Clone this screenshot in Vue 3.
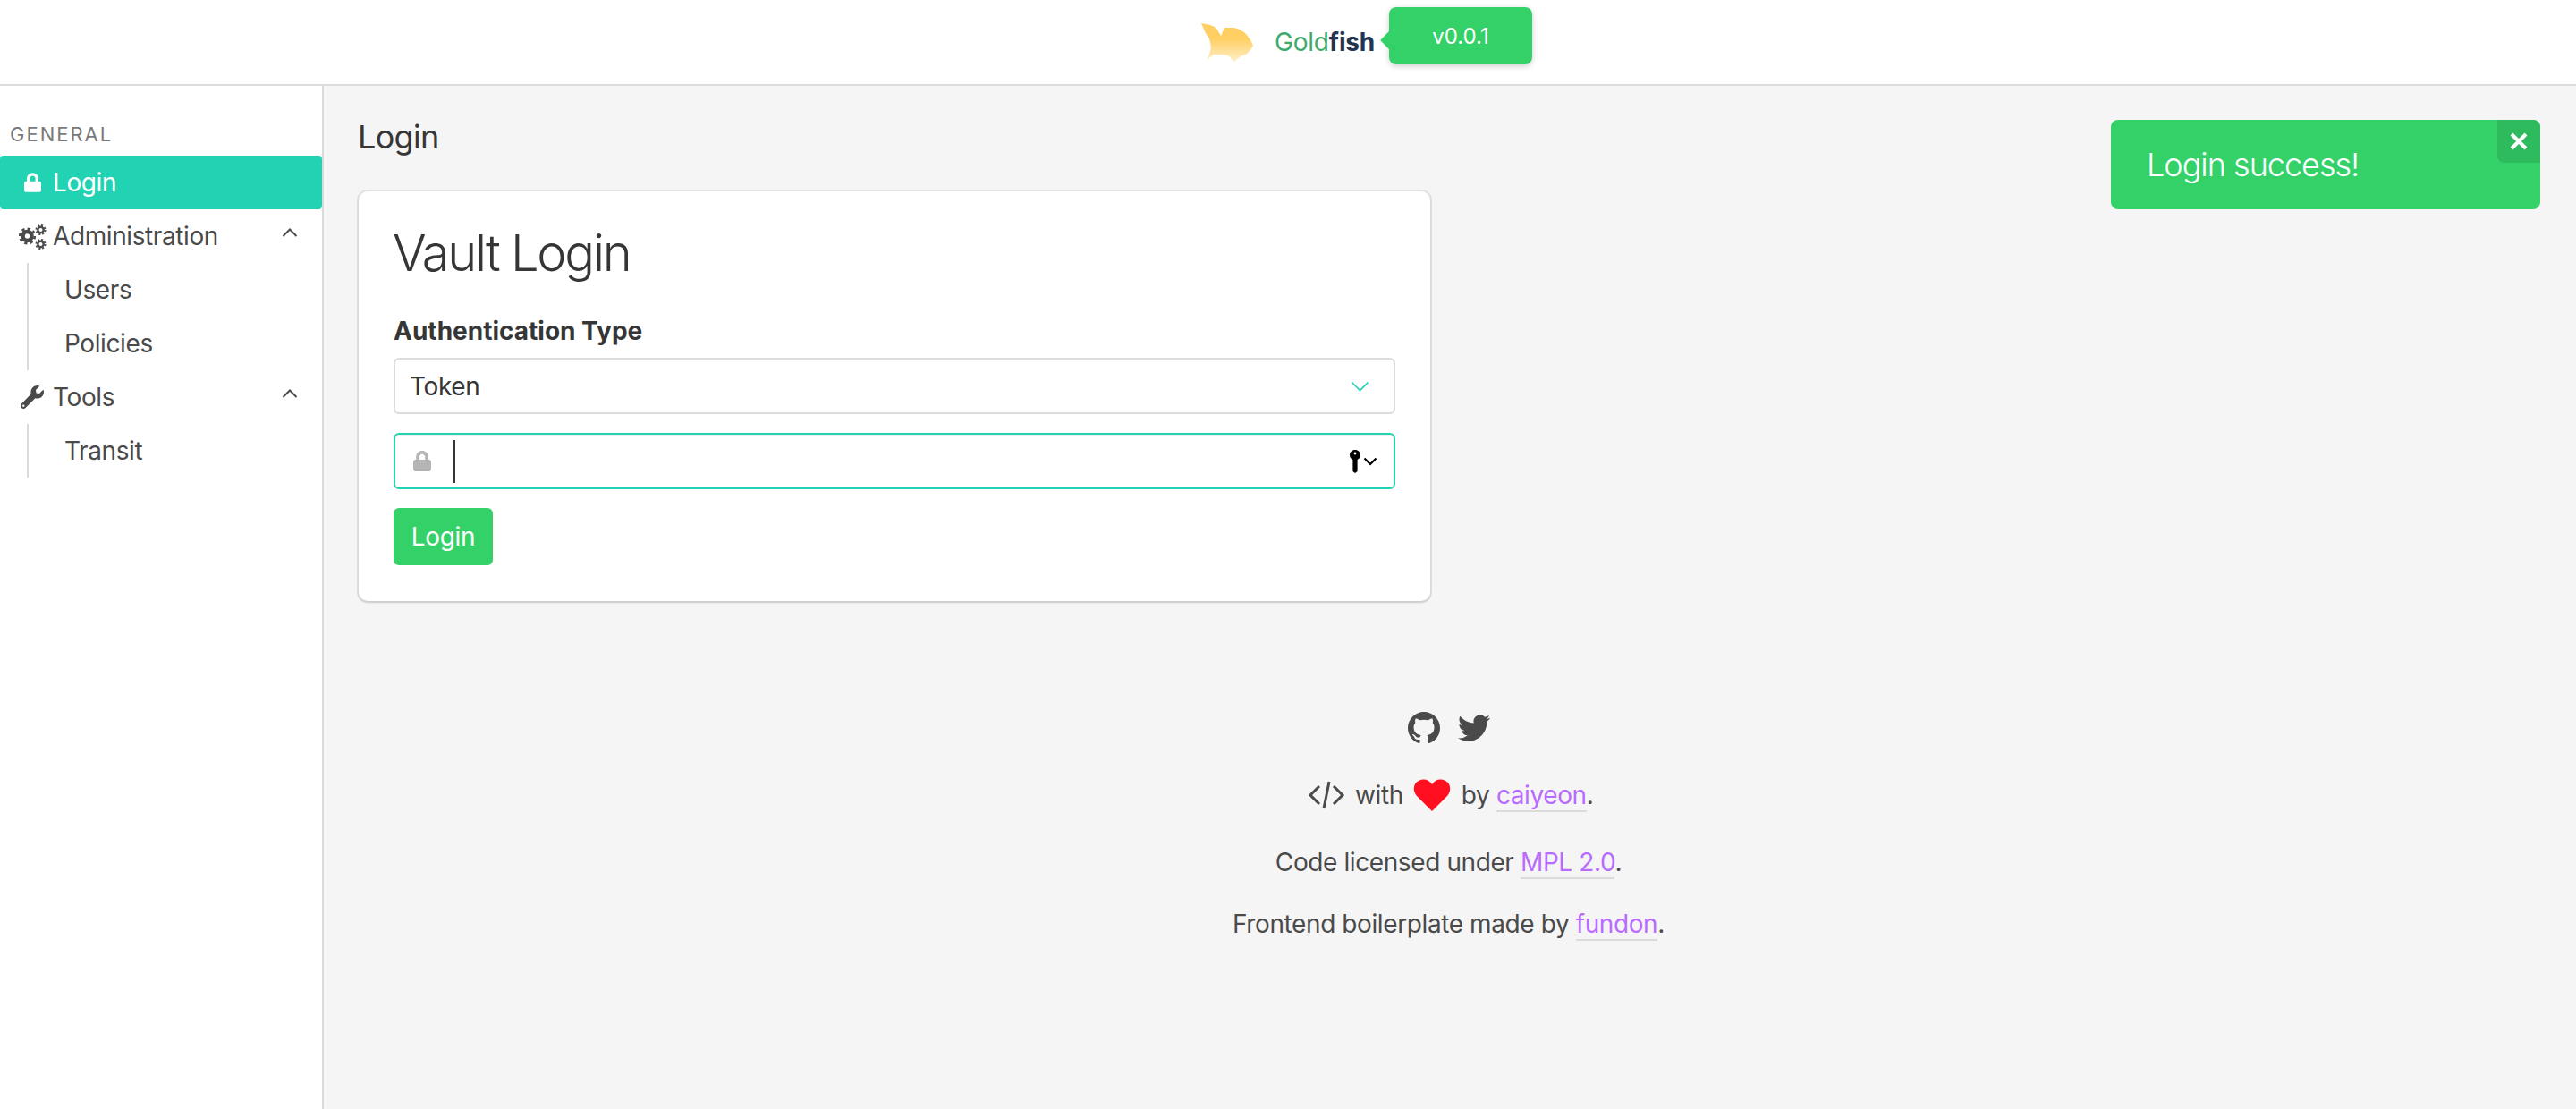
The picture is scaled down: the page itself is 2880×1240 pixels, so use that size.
<template>
  <div class="page">
    <header class="topbar">
      <div class="brand">
        <svg class="fish" viewBox="0 0 58 44" width="58" height="44">
          <defs>
            <linearGradient id="fishGold" x1="0" y1="0" x2="0" y2="1">
              <stop offset="0.4" stop-color="#ffcf63" />
              <stop offset="1" stop-color="#ffefca" />
            </linearGradient>
          </defs>
          <path
            d="M0 1 L10 3 Q17 5 19 10 L22 15 L26 6 L37 6 Q45 8 49 12 Q55 18 58 26 Q55 32 50 36 L44 38 L37 44 L30 37 L22 36 L14 36 L6 42 Q10 35 11 28 L9 18 Q5 13 4 10 Z"
            fill="url(#fishGold)"
          />
        </svg>
        <span class="brand-name">Gold<b>fish</b></span>
        <span class="version">v0.0.1</span>
      </div>
    </header>

    <div class="body-row">
      <aside class="sidebar">
        <p class="menu-label">GENERAL</p>
        <div class="menu-item active">
          <span class="menu-icon">
            <svg viewBox="0 0 448 512" width="19" height="22"><path fill="#fff" :d="lockPath" /></svg>
          </span>
          Login
        </div>
        <template v-for="group in groups" :key="group.label">
          <div class="menu-item">
            <span class="menu-icon">
              <svg v-if="group.icon === 'cogs'" viewBox="0 0 31 29" width="31" height="29">
                <circle cx="9.5" cy="14" r="5" fill="none" stroke="#4a4a4a" stroke-width="4.6" />
                <circle cx="9.5" cy="14" r="8.3" fill="none" stroke="#4a4a4a" stroke-width="2.6" stroke-dasharray="3.3 3.2" />
                <circle cx="24.5" cy="7" r="3.2" fill="none" stroke="#4a4a4a" stroke-width="2.4" />
                <circle cx="24.5" cy="7" r="5" fill="none" stroke="#4a4a4a" stroke-width="2" stroke-dasharray="2 1.93" />
                <circle cx="24.5" cy="23" r="3.2" fill="none" stroke="#4a4a4a" stroke-width="2.4" />
                <circle cx="24.5" cy="23" r="5" fill="none" stroke="#4a4a4a" stroke-width="2" stroke-dasharray="2 1.93" />
              </svg>
              <svg v-else viewBox="0 0 512 512" width="26" height="26"><path fill="#4a4a4a" :d="wrenchPath" /></svg>
            </span>
            {{ group.label }}
            <svg class="chev" viewBox="0 0 18 10" width="18" height="10">
              <path d="M1.5 9 L9 1.5 L16.5 9" fill="none" stroke="#4a4a4a" stroke-width="2" />
            </svg>
          </div>
          <ul class="sub-list">
            <li v-for="child in group.children" :key="child">{{ child }}</li>
          </ul>
        </template>
      </aside>

      <main class="content">
        <div class="notification">
          Login success!
          <button class="close">
            <svg viewBox="0 0 20 20" width="20" height="20">
              <path d="M2 2 L18 18 M18 2 L2 18" stroke="#fff" stroke-width="4" fill="none" />
            </svg>
          </button>
        </div>

        <h2 class="page-title">Login</h2>

        <section class="card">
          <h1 class="card-title">Vault Login</h1>
          <label class="field-label">Authentication Type</label>
          <div class="control select">
            Token
            <svg viewBox="0 0 21 12" width="21" height="12">
              <path d="M1.5 1.5 L10.5 10.5 L19.5 1.5" fill="none" stroke="#22d3b3" stroke-width="1.6" />
            </svg>
          </div>
          <div class="control token">
            <svg viewBox="0 0 448 512" width="20" height="23"><path fill="#b5b5b5" :d="lockPath" /></svg>
            <span class="caret"></span>
            <span class="key">
              <svg viewBox="0 0 12 26" width="12" height="26">
                <path d="M6 0 C9.5 0 12 2.6 12 5.8 C12 8.2 10.6 10 8.6 11 L8.6 24 L6 26 L3.4 24 L3.4 11 C1.4 10 0 8.2 0 5.8 C0 2.6 2.5 0 6 0 Z" fill="#000" />
                <circle cx="6" cy="4" r="1.4" fill="#fff" />
              </svg>
              <svg viewBox="0 0 16 10" width="16" height="10">
                <path d="M1.5 1.5 L8 8 L14.5 1.5" fill="none" stroke="#000" stroke-width="2.2" />
              </svg>
            </span>
          </div>
          <button class="login-btn">Login</button>
        </section>

        <footer class="credits">
          <div class="socials">
            <svg viewBox="0 0 16 16" width="36" height="36"><path fill="#4a4a4a" :d="githubPath" /></svg>
            <svg viewBox="0 0 24 24" width="36" height="36"><path fill="#4a4a4a" :d="twitterPath" /></svg>
          </div>
          <p class="line first">
            <svg class="code-icon" viewBox="0 0 42 32" width="42" height="32">
              <path d="M13 6 L3 16 L13 26 M29 6 L39 16 L29 26 M24 1 L18 31" fill="none" stroke="#4a4a4a" stroke-width="3" />
            </svg>
            with
            <svg class="heart" viewBox="0 0 42 36" width="42" height="36">
              <path d="M21 36 L4 19 C-1 13 0 5 6 2 C12 -1 18 1 21 6 C24 1 30 -1 36 2 C42 5 43 13 38 19 Z" fill="#ff0f1f" />
            </svg>
            by <a>caiyeon</a>.
          </p>
          <p class="line second">Code licensed under <a>MPL 2.0</a>.</p>
          <p class="line third">Frontend boilerplate made by <a>fundon</a>.</p>
        </footer>
      </main>
    </div>
  </div>
</template>

<script setup>
const lockPath =
  "M400 224h-24v-72C376 68.2 307.8 0 224 0S72 68.2 72 152v72H48c-26.5 0-48 21.5-48 48v192c0 26.5 21.5 48 48 48h352c26.5 0 48-21.5 48-48V272c0-26.5-21.5-48-48-48zm-104 0H152v-72c0-39.7 32.3-72 72-72s72 32.3 72 72v72z";
const wrenchPath =
  "M507.73 109.1c-2.24-9.03-13.54-12.09-20.12-5.51l-74.36 74.36-67.88-11.31-11.31-67.88 74.36-74.36c6.62-6.62 3.43-17.9-5.66-20.16-47.38-11.74-99.55.91-136.58 37.93-39.64 39.64-50.55 97.1-34.05 147.2L18.74 402.76c-24.99 24.99-24.99 65.51 0 90.5 24.99 24.99 65.51 24.99 90.5 0l213.21-213.21c50.12 16.71 107.47 5.68 147.37-34.22 37.07-37.07 49.7-89.32 37.91-136.73zM64 472c-13.25 0-24-10.75-24-24 0-13.26 10.75-24 24-24s24 10.74 24 24c0 13.25-10.75 24-24 24z";
const githubPath =
  "M8 0C3.58 0 0 3.58 0 8c0 3.54 2.29 6.53 5.47 7.59.4.07.55-.17.55-.38 0-.19-.01-.82-.01-1.49-2.01.37-2.53-.49-2.69-.94-.09-.23-.48-.94-.82-1.13-.28-.15-.68-.52-.01-.53.63-.01 1.08.58 1.23.82.72 1.21 1.87.87 2.33.66.07-.52.28-.87.51-1.07-1.78-.2-3.64-.89-3.64-3.95 0-.87.31-1.59.82-2.15-.08-.2-.36-1.02.08-2.12 0 0 .67-.21 2.2.82.64-.18 1.32-.27 2-.27.68 0 1.36.09 2 .27 1.53-1.04 2.2-.82 2.2-.82.44 1.1.16 1.92.08 2.12.51.56.82 1.27.82 2.15 0 3.07-1.87 3.75-3.65 3.95.29.25.54.73.54 1.48 0 1.07-.01 1.93-.01 2.2 0 .21.15.46.55.38A8.013 8.013 0 0016 8c0-4.42-3.58-8-8-8z";
const twitterPath =
  "M23.953 4.57a10 10 0 01-2.825.775 4.958 4.958 0 002.163-2.723c-.951.555-2.005.959-3.127 1.184a4.92 4.92 0 00-8.384 4.482C7.69 8.095 4.067 6.13 1.64 3.162a4.822 4.822 0 00-.666 2.475c0 1.71.87 3.213 2.188 4.096a4.904 4.904 0 01-2.228-.616v.06a4.923 4.923 0 003.946 4.827 4.996 4.996 0 01-2.212.085 4.936 4.936 0 004.604 3.417 9.867 9.867 0 01-6.102 2.105c-.39 0-.779-.023-1.17-.067a13.995 13.995 0 007.557 2.209c9.053 0 13.998-7.496 13.998-13.985 0-.21 0-.42-.015-.63A9.935 9.935 0 0024 4.59z";

const groups = [
  { label: "Administration", icon: "cogs", children: ["Users", "Policies"] },
  { label: "Tools", icon: "wrench", children: ["Transit"] },
];
</script>

<style>
body {
  background: #f5f5f5;
}
</style>

<style scoped>
.page {
  height: 1240px;
  display: flex;
  flex-direction: column;
  font-family: Inter, "Noto Sans", sans-serif;
  font-size: 28px;
  letter-spacing: -0.4px;
  color: #4a4a4a;
  background: #f5f5f5;
  overflow: hidden;
}
.topbar {
  height: 94px;
  flex-shrink: 0;
  display: flex;
  align-items: center;
  justify-content: center;
  background: #fff;
  border-bottom: 2px solid #dbdbdb;
}
.brand {
  position: relative;
  display: flex;
  align-items: center;
  gap: 24px;
}
.fish {
  filter: blur(0.7px);
}
.brand-name {
  font-size: 28px;
  letter-spacing: -0.2px;
  color: #3dab6e;
}
.brand-name b {
  color: #243551;
  font-weight: 700;
}
.version {
  position: absolute;
  left: 210px;
  top: -17px;
  width: 160px;
  height: 64px;
  line-height: 66px;
  text-align: center;
  font-size: 24px;
  letter-spacing: 0;
  color: #fff;
  background: #34d169;
  border-radius: 8px;
  box-shadow: 0 2px 6px rgba(10, 10, 10, 0.2);
}
.version::before {
  content: "";
  position: absolute;
  left: -7px;
  top: 30px;
  width: 14px;
  height: 14px;
  background: #34d169;
  transform: rotate(45deg);
}
.body-row {
  flex: 1;
  display: flex;
}
.sidebar {
  width: 360px;
  flex-shrink: 0;
  background: #fff;
  border-right: 2px solid #dbdbdb;
}
.menu-label {
  margin: 0;
  padding: 41px 0 11px 11px;
  height: 26px;
  line-height: 26px;
  font-size: 22px;
  letter-spacing: 2px;
  color: #7a7a7a;
}
.menu-item {
  height: 60px;
  display: flex;
  align-items: center;
  position: relative;
  padding-left: 59px;
}
.menu-item.active {
  color: #fff;
  background: #22d3b3;
  border-radius: 4px;
}
.menu-icon {
  position: absolute;
  left: 20px;
  width: 32px;
  display: flex;
  justify-content: center;
}
.chev {
  position: absolute;
  left: 315px;
  top: 21px;
}
.sub-list {
  list-style: none;
  margin: 0 0 0 30px;
  padding: 0 0 0 40px;
  border-left: 2px solid #dbdbdb;
}
.sub-list li {
  height: 60px;
  line-height: 60px;
}
.content {
  flex: 1;
  position: relative;
  padding: 0 42px 0 39px;
}
.notification {
  position: absolute;
  left: 1998px;
  top: 38px;
  width: 480px;
  height: 100px;
  padding-left: 40px;
  box-sizing: border-box;
  display: flex;
  align-items: center;
  font-size: 36px;
  font-weight: 300;
  letter-spacing: -1px;
  color: #fff;
  background: #34d169;
  border-radius: 8px;
}
.close {
  position: absolute;
  right: 0;
  top: 0;
  width: 48px;
  height: 48px;
  padding: 0;
  border: none;
  display: flex;
  align-items: center;
  justify-content: center;
  background: #2dbb5d;
  border-radius: 0 8px 0 8px;
}
.page-title {
  margin: 0 0 0 -1px;
  padding-top: 35px;
  height: 44px;
  line-height: 44px;
  font-size: 36px;
  font-weight: 400;
  letter-spacing: -0.7px;
  color: #363636;
}
.card {
  margin-top: 39px;
  width: 1198px;
  height: 458px;
  padding: 0 39px;
  box-sizing: border-box;
  background: #fff;
  border-radius: 10px;
  box-shadow: 0 2px 3px rgba(10, 10, 10, 0.1), 0 0 0 2px rgba(10, 10, 10, 0.08);
  display: flex;
  flex-direction: column;
  align-items: flex-start;
}
.card-title {
  margin: 35px 0 0 -1px;
  height: 68px;
  line-height: 68px;
  font-size: 56px;
  font-weight: 300;
  letter-spacing: -2.2px;
  color: #363636;
}
.field-label {
  margin-top: 36px;
  height: 34px;
  line-height: 34px;
  font-weight: 700;
  letter-spacing: 0;
  color: #363636;
}
.control {
  width: 100%;
  height: 63px;
  box-sizing: border-box;
  display: flex;
  align-items: center;
  background: #fff;
  border: 2px solid #dbdbdb;
  border-radius: 6px;
  color: #363636;
}
.select {
  margin-top: 13px;
  padding: 0 27px 0 16px;
  justify-content: space-between;
}
.token {
  margin-top: 21px;
  padding: 0 18px 0 20px;
  border-color: #22d3b3;
  box-shadow: inset 0 1px 2px rgba(10, 10, 10, 0.1);
}
.caret {
  width: 2px;
  height: 48px;
  margin-left: 25px;
  background: #363636;
}
.key {
  margin-left: auto;
  display: flex;
  align-items: center;
  gap: 3px;
}
.login-btn {
  margin-top: 21px;
  width: 111px;
  height: 64px;
  padding: 0;
  border: none;
  border-radius: 6px;
  background: #34d169;
  color: #fff;
  font: inherit;
  letter-spacing: -0.3px;
}
.credits {
  margin-top: 124px;
  text-align: center;
}
.socials {
  height: 36px;
  display: flex;
  justify-content: center;
  gap: 20px;
}
.line {
  margin: 0;
  line-height: 36px;
}
.line.first {
  margin-top: 39px;
}
.line.second {
  margin-top: 39px;
}
.line.third {
  margin-top: 33px;
}
.line a {
  color: #b86bff;
  border-bottom: 2px solid #dbdbdb;
}
.code-icon,
.heart {
  vertical-align: middle;
  margin: -4px 4px 0;
}
</style>
